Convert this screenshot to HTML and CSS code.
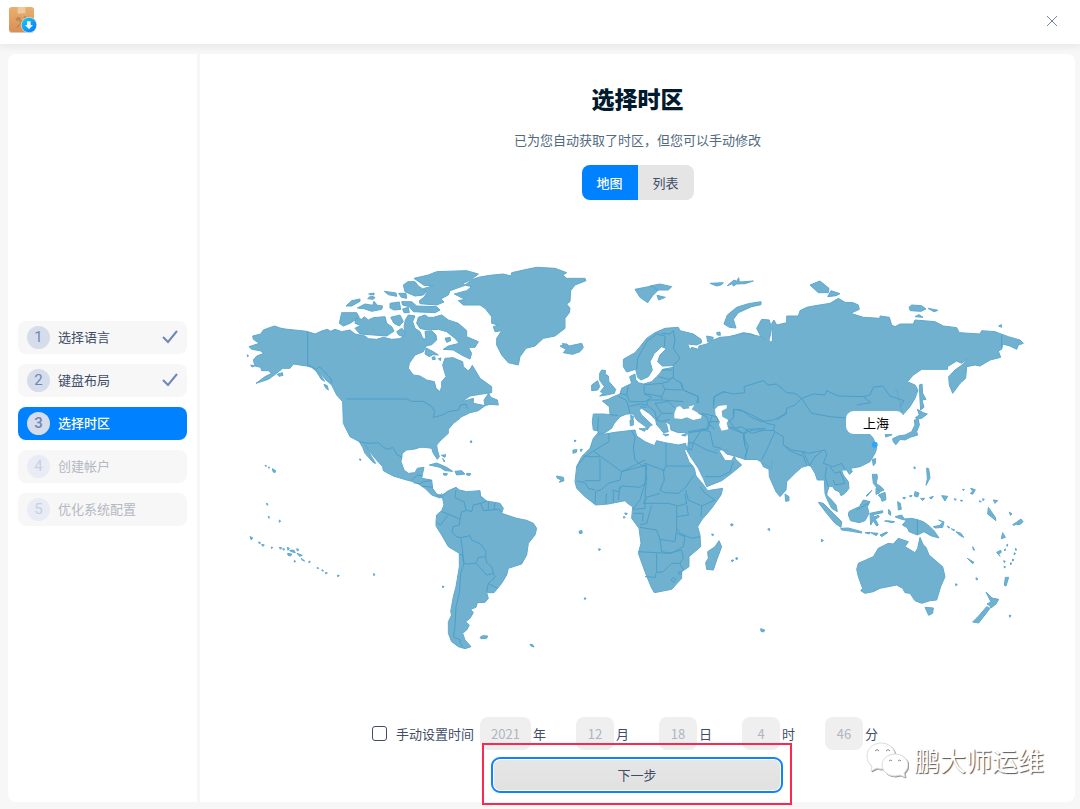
FILE: index.html
```
<!DOCTYPE html>
<html lang="zh-CN">
<head>
    <meta charset="UTF-8">
    <meta name="viewport" content="width=device-width, initial-scale=1.0">
    <title>选择时区</title>
    <link rel="stylesheet" href="styles.css">
</head>
<body>
    <header class="titlebar">
        <svg class="logo" viewBox="0 0 84 84" aria-hidden="true">
            <defs>
                <linearGradient id="box" x1="0" y1="0" x2="0" y2="1">
                    <stop offset="0" stop-color="#e9b06c"/>
                    <stop offset="1" stop-color="#d98f58"/>
                </linearGradient>
                <linearGradient id="badge" x1="0" y1="0" x2="1" y2="1">
                    <stop offset="0" stop-color="#10d0f4"/>
                    <stop offset="1" stop-color="#0a74f8"/>
                </linearGradient>
            </defs>
            <rect x="0" y="2" width="75" height="76" rx="10" fill="#d9c8ba"/>
            <rect x="0" y="0" width="75" height="75" rx="9" fill="url(#box)"/>
            <path d="M26 0h23v20l-5-3-4 4-5-3-4 3-5-2z" fill="#f0c99f"/>
            <path d="M19 36l9-7 8 3-3 3 24 26-5 5-23-26-5 3zM22 60l23-24-1-7 8-2-1 6 5 2-5 6-6-1-20 23z" fill="#c08550"/>
            <circle cx="60" cy="54" r="24" fill="#cfdce8"/>
            <circle cx="60" cy="54" r="22" fill="url(#badge)"/>
            <path d="M54 43h11v11h7L60 67 48 54h6z" fill="#eef6ff"/>
        </svg>
        <button class="close" type="button" aria-label="关闭">
            <svg viewBox="0 0 12 12"><path d="M1 1l10 10M11 1L1 11"/></svg>
        </button>
    </header>

    <div class="content">
        <nav class="sidebar">
            <ol class="steps">
                <li class="step"><span class="num">1</span>选择语言<svg class="check" viewBox="0 0 16 14"><path d="M1 7l5 5L15 1"/></svg></li>
                <li class="step"><span class="num">2</span>键盘布局<svg class="check" viewBox="0 0 16 14"><path d="M1 7l5 5L15 1"/></svg></li>
                <li class="step active"><span class="num">3</span>选择时区</li>
                <li class="step todo"><span class="num">4</span>创建帐户</li>
                <li class="step todo"><span class="num">5</span>优化系统配置</li>
            </ol>
        </nav>

        <main class="panel">
            <h1>选择时区</h1>
            <p class="tip">已为您自动获取了时区，但您可以手动修改</p>
            <div class="toggle">
                <button class="on" type="button">地图</button>
                <button type="button">列表</button>
            </div>

            <div class="map">
                <svg viewBox="-6 -3 2400 1200" role="img" aria-label="世界地图">
                    <!-- 北美 -->
                    <g class="land">
                        <path d="M38 228L62 222 70 210 88 203 104 198 120 204 135 207 200 214 225 222 245 213 262 208 272 214 285 208 305 215 330 210 345 222 375 228 385 236 410 238 430 232 455 238 480 236 498 222 492 200 496 180 505 165 525 168 518 185 525 205 540 215 548 235 558 238 555 215 575 212 588 225 590 240 575 254 558 258 550 275 525 285 508 310 505 325 520 345 540 348 560 360 583 365 588 385 600 395 605 380 605 365 618 350 612 330 608 315 615 295 640 293 655 300 668 305 670 320 684 332 690 328 697 316 720 355 755 380 755 398 720 403 690 408 665 425 700 415 700 430 735 437 715 452 690 458 665 470 660 475 640 490 625 508 625 520 600 543 590 555 592 570 598 590 592 598 580 580 575 565 555 562 540 562 525 567 500 570 487 580 483 605 492 630 505 640 525 638 532 625 552 622 548 640 545 655 575 660 578 685 590 702 603 706 615 700 640 686 640 715 615 706 600 714 575 705 555 685 530 668 500 660 460 648 430 632 428 620 405 595 380 562 375 553 395 590 407 610 400 608 375 580 368 562 358 545 330 530 310 490 308 425 290 405 275 375 258 360 245 345 230 335 215 322 200 318 160 312 150 325 128 325 110 340 85 358 48 370 75 350 95 340 85 332 65 332 62 322 45 318 40 300 50 288 72 280 60 272 35 268 27 260 58 250 40 238z"/>
                        <path d="M348 172L365 178 372 170 385 180 400 173 435 170 440 190 455 200 462 213 440 228 400 225 360 222 345 205 362 196 345 190zM305 158L350 158 358 172 330 190 310 198 298 190zM318 138L335 122 360 117 360 124 335 138zM352 144L375 132 398 136 402 124 412 136 428 138 425 148 395 154 372 146zM383 116L392 108 405 112 400 118zM386 102L402 99 402 105zM433 94L468 99 470 109 445 104zM450 130L478 126 482 148 462 150 450 144zM476 100L498 100 500 115 484 112zM488 147L505 142 508 158 492 158zM452 172L480 165 490 185 478 198 462 190zM470 215L485 205 497 215 492 230 476 225zM558 264L580 275 595 285 578 284 568 290 555 282zM576 292l8-2 2 8-8 1zM595 296l8-2-2 8zM615 235L630 232 632 242 620 247zM735 437L732 420 746 400 752 412 772 420 775 435 750 433zM228 332l12 10 14 22-10-6zM252 373l10 4 3 13-8-6zM112 343l15-5 2 8-12 3zM32 315l12 3-8 3zM568 615L590 609 620 622 638 634 615 632 600 622zM645 634L665 632 675 642 650 645zM610 640l12 1-2 5-9-1zM680 640l12 1-2 5-10-1zM604 586l13-2-2 8zM608 595l5 6v5zM690 545l5-2v5zM358 597l5 1-2 4zM22 284l3 3-2 4z"/>
                        <path d="M75 616l4 1-1 3zM85 621l4 1-2 3zM97 626l10 6-2 6-6-3zM79 730l5 2-2 4zM84 770l4 0-1 5zM30 830l8 3-4 7zM56 846l5 1-2 5zM65 853l8 2-5 4zM94 861l4 1-3 4zM118 862l7 1-4 5zM128 866l6 1-3 4zM142 862l6 3-4 6zM143 880l12 2-3 6-8-2zM149 872l12-2 5 8-8-2zM170 866l7 3-5 4zM171 880l16 6-8 3zM184 895l10 8-7-2zM207 903l4 2-4 4zM232 921l4 4-4 1zM246 929l5 3-5 1zM257 937l5 2-5 3zM293 945l5 2-5 3zM400 941l5 2-3 4zM163 901l4 3-4 3zM118 780l4 3-4 4z"/>
                    </g>
                    <!-- 格陵兰与北极群岛 -->
                    <g class="land" transform="translate(480 0)">
                        <path d="M163 102L200 92 215 80 195 75 215 60 235 52 270 46 310 42 333 48 335 38 380 28 410 22 465 25 500 38 488 45 500 55 555 55 558 62 525 75 512 92 510 125 500 132 510 145 508 158 495 175 495 205 465 228 430 235 405 258 378 265 360 290 355 315 325 308 305 285 290 255 290 235 305 212 285 215 280 200 295 195 275 190 275 170 255 145 240 135 190 135 175 122 195 118z"/>
                        <path d="M42 55L85 45 110 35 200 32 235 42 215 58 190 70 195 76 170 85 150 92 145 105 122 117 132 126 110 135 60 131 58 122 72 112 82 96 70 86 100 77 72 76zM10 75L24 65 45 65 55 78 80 95 70 105 45 108 15 95zM5 125L35 125 50 138 110 140 120 150 105 158 40 155 28 140 8 135zM55 172L75 165 85 172 100 172 125 165 145 180 175 190 200 212 200 230 235 245 225 262 205 262 215 280 210 297 185 285 160 270 130 268 145 258 178 250 165 235 140 215 115 208 80 210 60 205 50 190zM480 258L492 256 486 251 500 252 508 258 545 250 550 262 540 275 518 283 490 278 498 268z"/>
                    </g>
                    <!-- 南美 -->
                    <g class="land" transform="translate(540 540)">
                        <path d="M50 165L72 170 80 155 108 142 118 150 140 155 180 152 182 168 200 183 240 190 250 205 245 220 290 235 320 241 340 250 350 265 345 285 325 310 320 345 305 372 265 385 260 405 245 430 222 458 200 458 205 475 195 487 172 488 168 502 152 508 160 518 150 535 137 545 148 555 140 570 128 580 135 600 153 620 135 626 115 620 95 605 85 580 85 545 95 525 92 515 100 470 108 440 118 380 118 340 85 320 65 285 48 258 48 245 50 225 65 212 72 195 68 175z"/>
                        <path d="M180 592l8-5 15 1-3 7-17 1zM330 613l8 1 4 7-9-3zM67 438l5 2-3 4zM410 108l20 4 2 10-14 5 5-7-12-6zM150 4l5-1-1 5z"/>
                    </g>
                    <!-- 俄罗斯 -->
                    <g class="land" transform="translate(1320 30)">
                        <path d="M130 205L160 198 190 188 215 192 245 205 230 175 245 148 268 150 274 175 270 200 262 222 278 212 275 160 282 150 290 165 320 158 320 138 355 138 360 122 380 112 400 108 450 100 475 85 495 97 520 98 535 105 538 118 512 130 550 142 600 145 600 138 628 142 635 165 645 170 660 162 700 162 705 150 765 155 790 168 830 173 838 188 900 192 905 182 945 185 985 200 1020 210 1030 220 1015 225 1010 238 990 228 968 222 965 238 955 243 962 262 930 270 900 288 885 285 860 290 857 325 840 340 818 370 808 345 806 320 825 300 850 282 862 266 845 280 830 273 802 290 803 298 780 298 725 298 700 315 682 335 705 345 714 360 705 385 690 410 668 435 640 480 130 480z"/>
                        <path d="M132 162L142 135 170 112 205 101 243 95 243 104 215 110 175 128 160 148 168 174 148 172zM90 40l40-2-5 6-15 4zM142 47l20-17 8 4 6-11 2 13 42-3-25 8-25 1-10 6-3-7zM390 45L420 33 447 55 445 68 415 68zM443 80l10-18 27 9-12 6zM687 112l8-7 30 2 13 10-15 7-32-2zM744 115l30 6-12 4zM705 140l12-6 12 8zM956 168l8-4 1 8zM80 198l20 4-2 8-15 6zM110 188l10-2 1 10-9-1zM718 345L726 342 728 370 738 388 726 390 732 412 722 420 720 390z"/>
                    </g>
                    <!-- 东亚、南亚、大洋洲 -->
                    <g class="land" transform="translate(1470 330)">
                        <path d="M0 60L500 60 518 135 485 165 415 188 430 205 440 235 435 250 420 275 390 290 362 295 367 305 358 313 350 300 335 300 340 315 355 335 357 355 345 370 333 377 328 365 315 360 308 350 298 348 292 365 290 375 305 390 318 405 322 425 305 415 290 385 285 370 283 330 262 330 255 310 240 285 215 292 195 310 170 335 168 360 150 380 138 365 118 320 117 298 100 290 90 268 45 268 20 258 0 240z"/>
                        <path d="M165 372l12 8v12l-10 2zM265 397L280 400 310 430 335 455 333 472 315 460 290 430zM332 475L355 474 395 485 395 489 365 484 335 480zM405 488l15-1-2 5zM422 488l22 2-5 7zM450 495l20-9 3 2-18 12zM357 425L370 418 388 410 400 390 420 395 412 410 417 430 405 452 388 458 362 452 355 435zM420 430L458 422 458 428 430 434 432 441 445 436 448 440 436 448 445 465 440 468 430 452 422 465zM427 268L437 266 436 280 430 287zM427 313L441 313 442 325 438 340 455 352 462 360 450 365 430 340zM438 355l12 8-2 6-10 4zM445 375l20-8 3 22-12 5-3-10zM408 378l18-18-14 18zM476 418l6 8v10l-6-4zM464 453l8-1 22 3-8 3zM503 395l8 5 3 18-9 2zM488 206L505 198 525 195 545 185 555 165 553 150 565 148 568 165 560 185 563 195 540 202 525 210 510 208 498 224 490 216zM556 143L568 135 562 118 580 128 592 132 575 145 562 147zM465 185h22l-2 10-18 6zM495 440l20-5 8 12 22-2 20 5 15 5 20 15 12 12 15 22-25-7-20-12-20 10-25-10-5-12-15-8 12-14-20-5zM610 470l20-4 8-10-12-6 16 6-4 16-22 2z"/>
                        <path d="M385 580L430 560 445 535 475 520 490 522 505 505 535 515 525 530 555 548 563 535 570 502 580 525 588 532 597 555 638 590 645 620 632 650 620 690 600 692 575 700 555 692 540 670 525 668 518 655 500 645 450 655 430 665 405 670 392 662 398 655 385 620 380 598zM585 712l25 2-2 16-12 6zM768 666l18 18 20 4-8 14-15 12-5-8-7-4 12-6zM770 710l10 5-20 26-14 18-18-3 18-18zM775 412l-2 20 25 20-2-10zM590 294l6 2 4 28-12 22 4-20zM552 290l5 4-5 2zM555 365l12 4-4 12-10-3zM518 384l8-2-2 5zM538 378l8-2-3 5zM572 385l12 0-6 7zM598 383l12-4-6 8zM635 377l18 2-8 14zM673 386l6 2-4 3zM692 390l6 2-5 2zM722 355l14 4-8 14-7-3 7-6zM698 358h5l-3 4zM790 390l13 2-8 8zM748 392l6 3-5 1zM758 386l5 2-4 4zM838 426l8 6-5 4zM848 464l10-6 2 4-9 4zM860 456l13-9 6 8-8 8-10 1zM818 488l8 14-12 4zM800 547l12-6 2 6-8 6 4 6zM822 540l5-3-2 6zM829 525l4-2-1 6zM856 535l5 4-4 2zM853 548l4 3-5 3zM848 567l4 3-5 3zM842 578l4 3-5 3zM821 572l5 2-3 4zM822 589l5 2-4 3zM826 622l10 0-8 26-5-2zM712 565l20 12-4 4zM728 530l6 10-4 0zM738 623l6 4-5 3zM677 641l5 3-5 3zM652 468l8 5-4 1zM664 476l10 4-4 2zM678 485l15 5 8 12-12-6zM838 735l5 2-4 5zM92 776l12 4-3 6-8-2zM274 508l6 3-5 5zM113 478l5-3 1 7zM4 571l6 0-4 4zM18 564l6 1-5 4zM2 463l7 1-5 4z"/>
                    </g>
                    <!-- 中东、非洲 -->
                    <g class="land" transform="translate(975 420)">
                        <path d="M372 95L370 130 366 152 378 172 400 205 416 238 425 260 470 242 500 220 530 195 512 178 508 168 500 182 480 182 470 165 458 145 468 145 485 162 510 168 540 178 575 178 620 205 620 60 420 50z"/>
                        <path d="M100 98L120 102 150 97 210 90 215 108 240 125 268 137 275 122 300 128 340 135 362 130 366 148 358 150 372 185 388 205 393 228 412 250 428 272 473 265 468 285 440 325 410 360 398 380 405 405 407 440 372 470 372 500 350 515 350 535 320 568 268 578 258 560 240 515 220 460 228 430 222 385 200 355 203 320 190 312 180 302 165 305 130 312 92 315 60 290 35 265 30 245 35 200 50 170 75 145 85 115zM462 422L470 440 455 480 445 510 425 508 422 488 430 475 428 455 450 440zM42 394l8-3 2 8-8 2zM24 150l12-1-2 8-10 3zM28 120l5 2-4 4zM46 148l6 0-4 7zM179 339l8 1-4 5zM175 350l6 1-4 4zM101 446l6 2-5 4zM57 594l6 0-3 5zM440 402l7 2-5 3zM499 371l6 3-5 4zM501 480l5 1-4 4zM513 473l6 2-5 4z"/>
                    </g>
                    <!-- 欧洲 -->
                    <g class="land" transform="translate(975 30)">
                        <path d="M175 268L210 248 225 230 245 205 270 188 300 175 340 172 345 182 385 192 408 208 410 218 395 225 368 222 375 240 380 232 400 238 402 228 425 222 445 210 465 202 490 200 535 190 590 200 600 208 600 540 370 540 375 520 368 490 360 487 340 488 318 480 315 462 300 455 305 465 310 485 295 488 285 475 275 465 272 450 255 432 230 415 222 420 230 435 262 465 256 467 246 480 242 470 215 450 205 432 185 432 165 440 148 460 140 475 120 488 100 492 98 482 85 480 82 455 85 432 115 432 135 434 133 410 112 393 130 388 145 380 165 372 170 355 190 345 200 340 194 320 210 312 212 328 220 338 235 342 260 335 275 320 285 310 293 298 325 292 325 287 292 288 278 275 285 255 304 236 290 230 268 250 255 275 262 300 250 320 228 330 218 322 212 298 185 306 175 290z"/>
                        <path d="M104 378L115 370 106 365 118 350 104 330 104 310 110 300 122 302 120 312 130 318 132 335 152 358 148 370 125 375zM80 345L98 332 104 350 98 360 80 362zM197 436l8 3-1 10-6-2zM195 450h10v15l-9 2zM222 476l20 0-3 8zM294 492l18 2-10 4zM350 496l15-6-3 8zM210 58L240 52 262 48 280 60 262 78 248 98 225 82zM255 48L285 42 320 50 310 60 275 60zM276 76l25 6-20 8z"/>
                    </g>
                    <path class="inland" d="M1562 240h28l18 140h355v20h-355v200h-46v-24h-97v-14h97zM1354 562h70v12h-70z"/>
                    <!-- 内海 -->
                    <g class="sea" transform="translate(975 30)">
                        <path d="M345 408L355 418 375 415 370 410 388 405 380 418 410 435 408 445 385 450 365 442 350 447 328 445 328 430 335 412zM450 418L460 408 485 405 485 415 470 423 472 440 490 450 485 460 490 478 470 482 462 465 465 455 452 435z"/>
                    </g>
                    <!-- 国界线 -->
                    <g class="border">
                        <path d="M203 216V315L230 328 238 320 272 355 275 370M318 417H500L515 424 550 424 575 440 584 455 580 472 605 466 625 455 655 450 662 435 678 432 682 446M358 545L385 550 415 548 430 562 445 568 458 562 472 585 487 592M515 660L532 645 545 647M520 668L540 672 550 665 575 662M545 678L578 682M600 708L605 700"/>
                        <g transform="translate(540 540)">
                            <path d="M108 150L104 172 132 185 138 210 155 215 160 195 182 190 200 183M182 190L190 212 235 208 245 215M205 185L205 210M225 188L222 210M65 215L85 222 120 238 125 215 140 212M50 248L62 255 72 240 85 225M120 238L118 255 100 260 96 275 108 290 122 293 150 287 155 300 182 312 198 335 197 350 175 352 168 370 135 372 130 365 127 325 122 295M118 342L128 345 132 370 122 400 118 460 108 500 105 560 100 590 125 602M197 350L200 368 215 380 220 400 200 405 170 372M220 400L225 412 205 430 200 456M205 430L232 445M118 602L128 622"/>
                        </g>
                        <g transform="translate(1320 30)">
                            <path d="M0 335L10 360 55 380 55 400M100 405L102 380 130 365 160 372 195 368 192 350 250 332 265 345 290 342 320 368 345 370 365 385 400 372 435 375 440 362 475 378 550 380 570 375 580 352 608 348 630 378 672 392 660 410M365 385L395 430 450 440 510 445M550 380L572 398 530 405M365 385L345 405 320 415 318 432 290 450M965 195V235"/>
                        </g>
                        <g transform="translate(1470 330)">
                            <path d="M0 152L10 145 10 118 35 120 60 140 95 155 130 150 160 135 170 125M0 175L40 190 70 180 100 180 130 182 135 165 110 160 95 150M40 190L45 210 55 230 45 265M130 182L160 200 160 225 185 240 220 245 235 250 260 245 285 240 290 255 280 280 310 290 335 280 345 298M135 185L110 240 95 270M165 228L175 240 215 258 220 245 240 290M220 258L230 285M240 285L255 260 275 245M290 290L285 320 295 350M300 290L315 310 330 305 345 340 315 345 310 330M562 448V492M380 420L415 400"/>
                        </g>
                        <g transform="translate(975 420)">
                            <path d="M132 100L132 125 90 150 60 170 35 200M55 168L80 170 105 170M88 155L170 215 210 195 240 180M200 92L210 110 205 145 210 180 235 200 240 190 300 212M105 175V242H60M35 243L60 248 70 265 90 270M170 215L165 240 130 250 110 268 92 275M170 215L245 195 240 250 225 262 170 258 160 275 140 270M303 130V198H385M303 198L295 212 298 240 285 270 300 278 340 280 362 262 380 235 388 225M240 195L245 230 240 285 245 292 285 280M92 275L90 310M125 280L122 310M145 275L145 308M165 258L160 300M240 250L225 300 205 325M240 290L240 325 205 328M245 295L235 310 310 310 340 318 365 310 360 282M260 315L245 370 225 375M362 270L370 300 410 318 450 300 420 280 405 260M410 318L408 350M365 315L370 345 335 350 335 320M335 350L335 385 345 400 380 415 405 410M225 382L275 390 285 418 330 425 335 385M285 418L290 455 320 460 355 440 360 410 335 400M220 455L310 460 350 450 355 475 345 490 320 490 295 515 275 518 275 460M272 520V532L240 530M345 490L355 510M318 540L325 533 332 538 327 547zM340 516l8-2 2 8-8 1zM205 340L235 340 232 365M368 130L385 128 410 88 435 95 445 140 470 145M370 95L410 88 430 85M370 145L380 150 385 128 425 150 458 160M420 230L465 230 495 215 505 185M540 175L545 155 535 110 545 88 600 85M440 50L430 85"/>
                        </g>
                        <g transform="translate(975 30)">
                            <path d="M215 298L218 265 245 215 275 192 300 198 298 230M290 190L315 192 325 182 330 210 325 235 345 265 325 287M325 290L325 325 350 340 355 360 400 380 395 400M280 320L310 328 325 323M290 340L310 335 320 325M290 300L320 300M235 345L290 340 300 358 350 360M237 348L238 370 290 380 300 358M290 380L290 390 355 395M190 345L185 375 195 395 240 395 260 382 238 372M165 370L185 375M160 378L185 392 190 410 195 430M190 410L225 402 245 405 250 390 290 390M245 405L270 425 275 450 290 430 270 400 310 395 330 415M225 410L245 412M290 430L325 430M275 450L290 455 315 448M100 440L98 482M135 434L160 437M400 430L425 440 430 455 428 480 370 488M410 430L455 440 460 455 430 455M430 460L450 478M490 450L510 475 530 470 560 490 600 480M505 445L508 418 540 425 570 440 600 455M445 415L448 380 480 365M490 470L510 475 535 490 540 530"/>
                        </g>
                    </g>
                    <circle class="pin" cx="1904" cy="554" r="9"/>
                </svg>
                <span class="city">上海</span>
            </div>

            <form class="time">
                <label class="manual"><input type="checkbox">手动设置时间</label>
                <label class="field"><input class="year" type="text" value="2021" disabled>年</label>
                <label class="field"><input type="text" value="12" disabled>月</label>
                <label class="field"><input type="text" value="18" disabled>日</label>
                <label class="field"><input type="text" value="4" disabled>时</label>
                <label class="field"><input type="text" value="46" disabled>分</label>
            </form>

            <div class="next">
                <button type="button">下一步</button>
            </div>
        </main>
    </div>

    <div class="watermark">
        <svg viewBox="0 0 42 36" aria-hidden="true">
            <path class="shade" d="M15 1C7 1 1 7 1 14c0 5 2 8 5 10l-1 5 6-3c2 1 4 1 6 1-2-9 5-15 12-15C28 6 23 1 15 1z"/>
            <path class="shade" d="M29 12c-7 0-13 5-13 11s6 11 13 11l5-1 5 2-1-4c2-2 4-5 4-8 0-6-6-11-13-11z"/>
            <path class="eye" d="M9 9q2-3 4 0M20 9q2-3 4 0M23 19q2-2 3 0M32 19q2-2 3 0"/>
        </svg>
        <span>鹏大师运维</span>
    </div>
</body>
</html>
```
FILE: styles.css
```
* {
    box-sizing: border-box;
}

body {
    margin: 0;
    min-height: 100vh;
    display: flex;
    flex-direction: column;
    position: relative;
    background-color: #f7f7f7;
    font-family: "Noto Sans CJK SC", sans-serif;
    font-size: 13px;
    line-height: 20px;
    color: #414d68;
}

button,
input {
    font: inherit;
    color: inherit;
}

button {
    border: none;
    padding: 0;
    cursor: pointer;
}

/* 标题栏 */
.titlebar {
    height: 44px;
    padding: 0 20px 2px 9px;
    display: flex;
    align-items: center;
    justify-content: space-between;
    background-color: #fff;
    box-shadow: 0 4px 6px rgba(0, 0, 0, 0.05);
}

.logo {
    width: 28px;
    height: 28px;
}

.close {
    width: 16px;
    height: 16px;
    display: flex;
    align-items: center;
    justify-content: center;
    background: none;
}

.close svg {
    width: 12px;
    height: 12px;
    fill: none;
    stroke: #77849c;
    stroke-width: 1;
}

.content {
    flex: 1;
    display: flex;
    gap: 3px;
    padding: 10px 5px 7px 8px;
}

/* 左侧步骤 */
.sidebar {
    width: 189px;
    padding: 0 10px 10px;
    display: flex;
    align-items: center;
    background-color: #fff;
    border-radius: 8px 0 0 8px;
}

.steps {
    flex: 1;
    margin: 0;
    padding: 0;
    list-style: none;
    display: flex;
    flex-direction: column;
    gap: 10px;
}

.step {
    height: 33px;
    padding: 0 9px;
    display: flex;
    align-items: center;
    border-radius: 8px;
    background-color: #f7f7f7;
}

.num {
    width: 23px;
    margin-right: 8px;
    border-radius: 50%;
    background-color: #d5dcea;
    color: #6f86bb;
    font-family: Roboto, sans-serif;
    font-size: 15px;
    line-height: 23px;
    text-align: center;
}

.check {
    width: 16px;
    height: 14px;
    margin-left: auto;
    fill: none;
    stroke: #6f86bb;
    stroke-width: 2;
}

.step.active {
    background-color: #0081ff;
    color: #fff;
    font-weight: 500;
}

.step.todo {
    color: #b4b8c1;
}

.step.todo .num {
    background-color: #e9ecf4;
    color: #c6d0e6;
}

/* 右侧主面板 */
.panel {
    flex: 1;
    padding: 28px 0 9px;
    display: flex;
    flex-direction: column;
    align-items: center;
    background-color: #fff;
    border-radius: 0 8px 8px 0;
}

h1 {
    margin: 0;
    font-size: 23px;
    line-height: 32px;
    font-weight: 900;
    color: #001a2e;
}

.tip {
    margin: 16px 0 15px;
    color: #526a7f;
}

.toggle {
    display: flex;
    border-radius: 8px;
    overflow: hidden;
}

.toggle button {
    width: 56px;
    height: 35px;
    background-color: #e5e5e5;
}

.toggle .on {
    background-color: #0081ff;
    color: #fff;
    font-weight: 500;
}

/* 地图 */
.map {
    position: relative;
    width: 100%;
    max-width: 800px;
    margin: auto 0;
}

.map svg {
    display: block;
    width: 100%;
}

.land {
    fill: #70b1cf;
    stroke: #5fa9d0;
    stroke-width: 3;
    stroke-linejoin: round;
}

.inland {
    fill: #70b1cf;
}

.sea {
    fill: #fff;
}

.border {
    fill: none;
    stroke: #4b9fca;
    stroke-width: 3;
    stroke-linejoin: round;
}

.pin {
    fill: #2ca7f8;
}

.city {
    position: absolute;
    left: 76%;
    top: 38%;
    width: 58px;
    padding-left: 3px;
    border-radius: 8px;
    background-color: #fff;
    color: #000;
    line-height: 23px;
    text-align: center;
}

/* 时间设置 */
.time {
    display: flex;
    align-items: center;
    gap: 30px;
    padding-right: 25px;
    margin-bottom: 7px;
}

.manual {
    display: flex;
    align-items: center;
    gap: 9px;
    margin-right: -24px;
}

.manual input {
    appearance: none;
    width: 15px;
    height: 15px;
    margin: 0;
    border: 1px solid #414d68;
    border-radius: 3px;
}

.field {
    display: flex;
    align-items: center;
    gap: 2px;
}

.field input {
    width: 38px;
    height: 33px;
    padding: 0;
    border: none;
    border-radius: 8px;
    background-color: #efefef;
    color: #b0b5c0;
    text-align: center;
}

.field .year {
    width: 51px;
}

.next {
    position: relative;
    margin-right: 1px;
}

.next button {
    display: block;
    width: 292px;
    height: 36px;
    border: 2px solid #0d84fb;
    border-radius: 9px;
    background: linear-gradient(#e6e6e6, #e1e1e1);
    box-shadow: inset 0 0 0 1px #fff;
}

/* 红色提示框 */
.next::after {
    content: "";
    position: absolute;
    inset: -14px -9px -12px;
    border: 2px solid #fc2850;
    pointer-events: none;
}

/* 水印 */
.watermark {
    position: absolute;
    right: 36px;
    bottom: 30px;
    display: flex;
    align-items: center;
    gap: 6px;
    color: #fff;
    font-size: 26px;
    line-height: 38px;
    text-shadow: 1px 1px 1px #555;
}

.watermark svg {
    width: 42px;
    height: 36px;
    fill: none;
    filter: drop-shadow(1px 1px 0 #999);
}

.shade {
    fill: #fff;
    stroke: #ddd;
}

.eye {
    stroke: #888;
}
```
